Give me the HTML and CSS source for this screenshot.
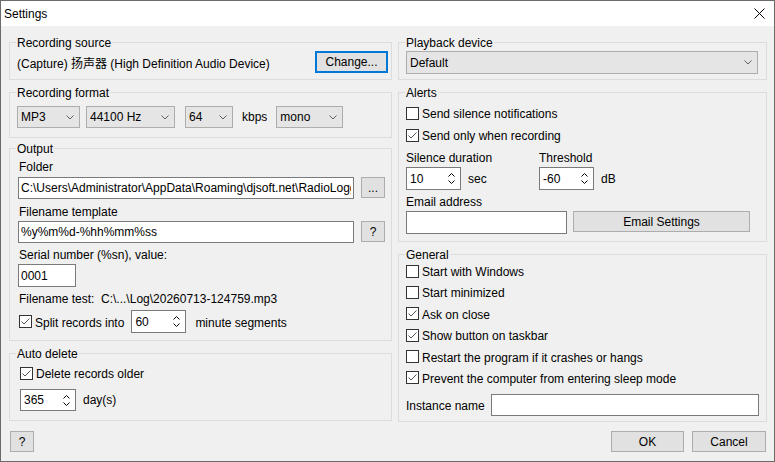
FILE: index.html
```html
<!DOCTYPE html>
<html lang="en">
<head>
  <meta charset="UTF-8" />
  <title>Settings</title>
  <link rel="stylesheet" href="styles.css">
</head>
<body>

  <div class="window">
    <div class="titlebar">
      <span class="title">Settings</span>
      <svg class="close" width="11" height="11" viewBox="0 0 11 11"><path d="M0.5 0.5L10.5 10.5M10.5 0.5L0.5 10.5" stroke="#000" stroke-width="1" fill="none"/></svg>
    </div>

    <div class="content">
      <div class="columns">

        <!-- left column -->
        <div class="col col-left">
          <div class="group g-source">
            <div class="group-title">Recording source</div>
            <div class="source-row">
              <span>(Capture) 扬声器 (High Definition Audio Device)</span>
              <button class="btn btn-default btn-change">Change...</button>
            </div>
          </div>

          <div class="group g-format">
            <div class="group-title">Recording format</div>
            <div class="format-row">
              <div class="combo combo-codec"><span>MP3</span><svg width="8" height="5" viewBox="0 0 8 5"><path d="M0.5 0.5L4 4L7.5 0.5" stroke="#606060" fill="none"/></svg></div>
              <div class="combo combo-rate"><span>44100 Hz</span><svg width="8" height="5" viewBox="0 0 8 5"><path d="M0.5 0.5L4 4L7.5 0.5" stroke="#606060" fill="none"/></svg></div>
              <div class="combo combo-bitrate"><span>64</span><svg width="8" height="5" viewBox="0 0 8 5"><path d="M0.5 0.5L4 4L7.5 0.5" stroke="#606060" fill="none"/></svg></div>
              <span class="kbps">kbps</span>
              <div class="combo combo-mode"><span>mono</span><svg width="8" height="5" viewBox="0 0 8 5"><path d="M0.5 0.5L4 4L7.5 0.5" stroke="#606060" fill="none"/></svg></div>
            </div>
          </div>

          <div class="group g-output">
            <div class="group-title">Output</div>
            <div class="label l-folder">Folder</div>
            <div class="field-row r-folder">
              <input class="edit edit-path" type="text" value="C:\Users\Administrator\AppData\Roaming\djsoft.net\RadioLogger\Log">
              <button class="btn btn-small">...</button>
            </div>
            <div class="label l-template">Filename template</div>
            <div class="field-row r-template">
              <input class="edit edit-path" type="text" value="%y%m%d-%hh%mm%ss">
              <button class="btn btn-small">?</button>
            </div>
            <div class="label l-serial">Serial number (%sn), value:</div>
            <input class="edit edit-serial" type="text" value="0001">
            <div class="label l-test">Filename test:&nbsp; C:\...\Log\20260713-124759.mp3</div>
            <div class="check-row r-split">
              <span class="check on"><svg width="11" height="11" viewBox="0 0 11 11"><path d="M1.5 5.5L4 8L9.5 2.5" stroke="#555" fill="none"/></svg></span>
              <span>Split records into</span>
              <div class="spin spin-split"><span>60</span><svg width="7" height="13" viewBox="0 0 7 13"><path d="M0.5 4.5L3.5 1.5L6.5 4.5M0.5 8.5L3.5 11.5L6.5 8.5" stroke="#000" fill="none"/></svg></div>
              <span>minute segments</span>
            </div>
          </div>

          <div class="group g-delete">
            <div class="group-title">Auto delete</div>
            <div class="check-row r-delete">
              <span class="check on"><svg width="11" height="11" viewBox="0 0 11 11"><path d="M1.5 5.5L4 8L9.5 2.5" stroke="#555" fill="none"/></svg></span>
              <span>Delete records older</span>
            </div>
            <div class="unit-row r-days">
              <div class="spin spin-days"><span>365</span><svg width="7" height="13" viewBox="0 0 7 13"><path d="M0.5 4.5L3.5 1.5L6.5 4.5M0.5 8.5L3.5 11.5L6.5 8.5" stroke="#000" fill="none"/></svg></div>
              <span>day(s)</span>
            </div>
          </div>
        </div>

        <!-- right column -->
        <div class="col col-right">
          <div class="group g-playback">
            <div class="group-title">Playback device</div>
            <div class="combo combo-device"><span>Default</span><svg width="8" height="5" viewBox="0 0 8 5"><path d="M0.5 0.5L4 4L7.5 0.5" stroke="#606060" fill="none"/></svg></div>
          </div>

          <div class="group g-alerts">
            <div class="group-title">Alerts</div>
            <div class="check-row r-silence">
              <span class="check"></span>
              <span>Send silence notifications</span>
            </div>
            <div class="check-row r-recording">
              <span class="check on"><svg width="11" height="11" viewBox="0 0 11 11"><path d="M1.5 5.5L4 8L9.5 2.5" stroke="#555" fill="none"/></svg></span>
              <span>Send only when recording</span>
            </div>
            <div class="alert-grid">
              <div class="label">Silence duration</div>
              <div class="label">Threshold</div>
              <div class="unit-row">
                <div class="spin"><span>10</span><svg width="7" height="13" viewBox="0 0 7 13"><path d="M0.5 4.5L3.5 1.5L6.5 4.5M0.5 8.5L3.5 11.5L6.5 8.5" stroke="#000" fill="none"/></svg></div>
                <span>sec</span>
              </div>
              <div class="unit-row">
                <div class="spin"><span>-60</span><svg width="7" height="13" viewBox="0 0 7 13"><path d="M0.5 4.5L3.5 1.5L6.5 4.5M0.5 8.5L3.5 11.5L6.5 8.5" stroke="#000" fill="none"/></svg></div>
                <span>dB</span>
              </div>
            </div>
            <div class="label l-email">Email address</div>
            <div class="email-row">
              <input class="edit edit-email" type="text" value="">
              <button class="btn btn-email">Email Settings</button>
            </div>
          </div>

          <div class="group g-general">
            <div class="group-title">General</div>
            <div class="check-list">
              <div class="check-row"><span class="check"></span><span>Start with Windows</span></div>
              <div class="check-row"><span class="check"></span><span>Start minimized</span></div>
              <div class="check-row"><span class="check on"><svg width="11" height="11" viewBox="0 0 11 11"><path d="M1.5 5.5L4 8L9.5 2.5" stroke="#555" fill="none"/></svg></span><span>Ask on close</span></div>
              <div class="check-row"><span class="check on"><svg width="11" height="11" viewBox="0 0 11 11"><path d="M1.5 5.5L4 8L9.5 2.5" stroke="#555" fill="none"/></svg></span><span>Show button on taskbar</span></div>
              <div class="check-row"><span class="check"></span><span>Restart the program if it crashes or hangs</span></div>
              <div class="check-row"><span class="check on"><svg width="11" height="11" viewBox="0 0 11 11"><path d="M1.5 5.5L4 8L9.5 2.5" stroke="#555" fill="none"/></svg></span><span>Prevent the computer from entering sleep mode</span></div>
            </div>
            <div class="instance-row">
              <span>Instance name</span>
              <input class="edit edit-instance" type="text" value="">
            </div>
          </div>
        </div>

      </div>

      <div class="footer">
        <button class="btn btn-help">?</button>
        <div class="footer-right">
          <button class="btn btn-ok">OK</button>
          <button class="btn btn-cancel">Cancel</button>
        </div>
      </div>
    </div>
  </div>

</body>
</html>
```

FILE: styles.css
```css
* {
  margin: 0; padding: 0; box-sizing: border-box;
}

body {
  font-family: "Liberation Sans", Arial, "Noto Sans CJK SC", sans-serif;
  font-size: 12px;
  color: #000;
  background: #fff;
}

.window {
  width: 775px;
  height: 462px;
  border: 1px solid #6b6b6b;
  background: #f0f0f0;
  display: flex;
  flex-direction: column;
}

.titlebar {
  height: 25px;
  background: #fff;
  display: flex;
  align-items: center;
  justify-content: space-between;
  padding: 0 9px 0 3px;
}

.content {
  padding: 16px 7px 0 8px;
}

.columns {
  display: flex;
  align-items: flex-start;
  gap: 6px;
}

.col-left { width: 383px; }
.col-right { width: 369px; }

/* group boxes */
.group {
  border: 1px solid #dcdcdc;
  padding: 0 7px;
}

.group-title {
  width: fit-content;
  line-height: 16px;
  margin: -9px 0 -1px -1px;
  padding: 1px 1px 0;
  background: #f0f0f0;
}

.col-left .group { padding-right: 5px; }

.g-source { height: 38px; }
.g-format { height: 46px; margin-top: 12px; }
.g-output { height: 193px; margin-top: 10px; padding-left: 8px; }
.g-delete { height: 68px; margin-top: 12px; padding-left: 8px; }
.g-output .group-title, .g-delete .group-title { margin-left: -2px; }

.g-playback { height: 38px; }
.g-alerts { height: 150px; margin-top: 12px; }
.g-general { height: 168px; margin-top: 12px; }

/* text sits a pixel lower than the box centre, like the native font */
.label {
  line-height: 16px;
  padding-top: 1px;
  margin-bottom: -1px;
}

.check-row > span:not(.check),
.instance-row > span {
  padding-top: 2px;
}

/* controls */
.btn {
  font: inherit;
  color: #000;
  background: #e1e1e1;
  border: 1px solid #adadad;
  height: 21px;
}

.btn-default {
  border: 2px solid #0078d7;
}

.edit {
  font: inherit;
  color: #000;
  height: 22px;
  border: 1px solid #7a7a7a;
  background: #fff;
  padding: 0 2px;
  outline: none;
}

.combo {
  display: flex;
  align-items: center;
  justify-content: space-between;
  height: 22px;
  padding: 0 5px 0 3px;
  background: #e5e5e5;
  border: 1px solid #adadad;
}

.spin {
  display: flex;
  align-items: center;
  justify-content: space-between;
  width: 55px;
  height: 23px;
  padding: 0 5px 0 3px;
  background: #fff;
  border: 1px solid #7a7a7a;
}

.check {
  width: 13px;
  height: 13px;
  border: 1px solid #333;
  background: #fff;
  flex: none;
}

.check svg { display: block; }

.check-row {
  display: flex;
  align-items: center;
  gap: 3px;
  height: 16px;
}

.unit-row {
  display: flex;
  align-items: center;
  gap: 7px;
}

/* recording source */
.source-row {
  display: flex;
  align-items: center;
  justify-content: space-between;
  height: 22px;
  margin-top: 1px;
}

.btn-change {
  width: 73px;
  height: 22px;
  margin-right: -2px;
}

/* recording format */
.format-row {
  display: flex;
  align-items: center;
  margin-top: 6px;
}

.combo-codec { width: 63px; }
.combo-rate { width: 89px; margin-left: 6px; }
.combo-bitrate { width: 48px; margin-left: 10px; }
.kbps { margin-left: 9px; }
.combo-mode { width: 67px; margin-left: 9px; }

/* output */
.l-folder { margin: 2px 0 -1px 1px; }
.l-template { margin: 4px 0 -1px 1px; }
.l-serial { margin: 3px 0 -1px 1px; }
.l-test { margin: 3px 0 -1px 1px; }

.field-row {
  display: flex;
  align-items: flex-start;
  gap: 7px;
}

.r-folder { margin-top: 3px; }
.r-template { margin-top: 2px; }

.edit-path { width: 336px; }

.btn-small {
  width: 24px;
  height: 21px;
}

.edit-serial {
  display: block;
  width: 58px;
  height: 23px;
  margin-top: 2px;
}

.r-split {
  height: 23px;
  margin: 4px 0 0 1px;
}

.spin-split { margin: 0 6px 0 4px; }

/* auto delete */
.r-delete { margin: 4px 0 0 2px; }
.r-days { margin: 8px 0 0 2px; }
.spin-days { width: 56px; height: 22px; }

/* playback */
.combo-device {
  height: 23px;
  margin: 1px 1px 0 0;
}

/* alerts */
.r-silence { margin-top: 5px; }
.r-recording { margin-top: 6px; }

.alert-grid {
  display: grid;
  grid-template-columns: 133px auto;
  row-gap: 2px;
  margin-top: 6px;
}

.l-email { margin-top: 3px; }

.email-row {
  display: flex;
  align-items: flex-start;
  gap: 6px;
  margin-top: 2px;
}

.edit-email { width: 161px; height: 23px; }
.btn-email { width: 177px; }

/* general */
.check-list {
  display: flex;
  flex-direction: column;
  gap: 5.4px;
  margin-top: 1px;
}

.instance-row {
  display: flex;
  align-items: center;
  gap: 6px;
  margin-top: 8px;
}

.edit-instance { flex: 1; }

/* footer */
.footer {
  display: flex;
  align-items: center;
  margin-top: 9px;
}

.btn-help { width: 24px; margin-left: 1px; }

.footer-right {
  display: flex;
  gap: 8px;
  margin: 0 1px 0 auto;
}

.btn-ok { width: 73px; }
.btn-cancel { width: 74px; }
```
